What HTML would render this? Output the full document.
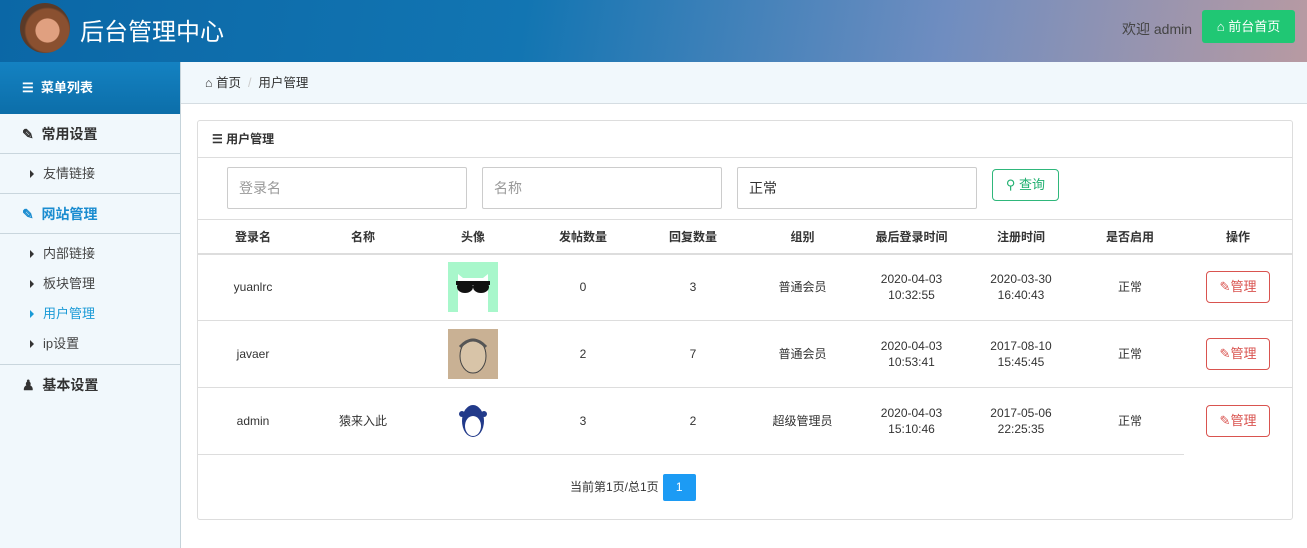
<!DOCTYPE html>
<html><head><meta charset="utf-8">
<style>
*{margin:0;padding:0;box-sizing:border-box}
body{width:1307px;height:548px;overflow:hidden;font-family:"Liberation Sans","Noto Sans CJK SC",sans-serif;background:#fff;position:relative;color:#333;font-size:13px}
.hdr{position:absolute;left:0;top:0;width:1307px;height:62px;background:linear-gradient(100deg,#0b67a6 0%,#1275b2 40%,#6f8dc0 72%,#b89aa2 100%)}
.logo{position:absolute;left:20px;top:3px;width:50px;height:50px;border-radius:50%;background:radial-gradient(ellipse at 55% 55%,#e0a080 0 30%,#8a5030 32% 55%,#5a3a28 60%);overflow:hidden}
.title{position:absolute;left:80px;top:12px;color:#fff;font-size:24px}
.wel{position:absolute;left:1122px;top:19px;color:#444;font-size:14px}
.qbtn{position:absolute;left:1202px;top:10px;width:93px;height:33px;background:#20c774;border-radius:3px;color:#fff;font-size:13px;line-height:33px;text-align:center}
.side{position:absolute;left:0;top:62px;width:181px;height:486px;background:#f1f8fc;border-right:1px solid #c5d3da}
.mtop{height:52px;background:linear-gradient(180deg,#1482c2,#0c6ea9);color:#fff;font-weight:bold;font-size:13px;line-height:52px;padding-left:22px}
.grp{height:40px;line-height:40px;padding-left:22px;font-size:14px;font-weight:bold;border-bottom:1px solid #c9d6dd;color:#333}
.sub{height:40px;line-height:40px;padding-left:30px;font-size:13px;border-bottom:1px solid #c9d6dd;color:#444}
.si{height:30px;line-height:30px;padding-left:30px;font-size:13px;color:#444}
.tri{display:inline-block;width:0;height:0;border-left:4px solid #333;border-top:4px solid transparent;border-bottom:4px solid transparent;margin-right:9px;vertical-align:0}
.bc{position:absolute;left:181px;top:62px;width:1126px;height:42px;background:#f1f8fc;border-bottom:1px solid #d5dde2;font-size:12.5px;line-height:42px;padding-left:24px;color:#333}
.card{position:absolute;left:197px;top:120px;width:1096px;height:400px;border:1px solid #ddd;border-radius:3px}
.ch{height:37px;border-bottom:1px solid #ddd;line-height:37px;padding-left:14px;font-weight:bold;font-size:12px}
.inp{position:absolute;top:46px;width:240px;height:42px;border:1px solid #ccc;border-radius:2px;font-size:14px;line-height:40px;padding-left:11px;color:#999}
.sbtn{position:absolute;left:794px;top:48px;width:67px;height:32px;border:1px solid #2fb77b;border-radius:4px;color:#20b070;font-size:13px;line-height:30px;text-align:center}
table{position:absolute;left:0;top:98px;width:1094px;border-collapse:collapse;font-size:12px;table-layout:fixed}
th{height:34px;border-top:1px solid #ddd;border-bottom:2px solid #ddd;font-weight:bold;text-align:center}
td{height:67px;border-bottom:1px solid #ddd;text-align:center;line-height:16px;color:#333}
.mb{display:inline-block;width:64px;height:32px;border:1px solid #d9534f;border-radius:4px;color:#d9534f;font-size:13px;line-height:30px}
.pg{position:absolute;left:372px;top:353px;font-size:12px;line-height:26px}
.pg span{display:inline-block;width:33px;height:27px;background:#1c9bf4;color:#fff;text-align:center;border-radius:2px;margin-left:4px;vertical-align:middle}
</style></head><body>
<div class="hdr">
<div class="logo"></div>
<div class="title">后台管理中心</div>
<div class="wel">欢迎 admin</div>
<div class="qbtn">&#8962; 前台首页</div>
</div>
<div class="side">
<div class="mtop">&#9776;&nbsp;&nbsp;菜单列表</div>
<div class="grp">&#9998;&nbsp; 常用设置</div>
<div class="sub"><i class="tri"></i>友情链接</div>
<div class="grp" style="color:#1a8cd0">&#9998;&nbsp; 网站管理</div>
<div style="padding:5px 0;border-bottom:1px solid #c9d6dd">
<div class="si"><i class="tri"></i>内部链接</div>
<div class="si"><i class="tri"></i>板块管理</div>
<div class="si" style="color:#1a9ad6"><i class="tri" style="border-left-color:#1a9ad6"></i>用户管理</div>
<div class="si"><i class="tri"></i>ip设置</div>
</div>
<div class="grp" style="border:none">&#9823;&nbsp; 基本设置</div>
</div>
<div class="bc">&#8962; 首页 &nbsp;<span style="color:#ccc">/</span>&nbsp; 用户管理</div>
<div class="card">
<div class="ch">&#9776; 用户管理</div>
<div class="inp" style="left:29px">登录名</div>
<div class="inp" style="left:284px">名称</div>
<div class="inp" style="left:539px;color:#333">正常</div>
<div class="sbtn">&#9906; 查询</div>
<table>
<colgroup><col style="width:110px"><col style="width:110px"><col style="width:110px"><col style="width:110px"><col style="width:110px"><col style="width:109px"><col style="width:109px"><col style="width:110px"><col style="width:108px"><col style="width:108px"></colgroup>
<tr><th>登录名</th><th>名称</th><th>头像</th><th>发帖数量</th><th>回复数量</th><th>组别</th><th>最后登录时间</th><th>注册时间</th><th>是否启用</th><th>操作</th></tr>
<tr><td>yuanlrc</td><td></td><td><svg width="50" height="50" style="vertical-align:middle"><rect width="50" height="50" fill="#a8f7cb"/><path d="M10 50V12l5 4h20l5-4v38z" fill="#fff"/><rect x="8" y="19" width="34" height="4" fill="#111"/><ellipse cx="17" cy="25" rx="8" ry="6" fill="#111"/><ellipse cx="33" cy="25" rx="8" ry="6" fill="#111"/></svg></td><td>0</td><td>3</td><td>普通会员</td><td>2020-04-03<br>10:32:55</td><td>2020-03-30<br>16:40:43</td><td>正常</td><td><span class="mb">&#9998;管理</span></td></tr>
<tr><td>javaer</td><td></td><td><svg width="50" height="50" style="vertical-align:middle"><rect width="50" height="50" fill="#c9b194"/><ellipse cx="25" cy="27" rx="13" ry="17" fill="#d8c4a8" stroke="#444"/><path d="M12 18q13-14 26 0" stroke="#555" fill="none" stroke-width="3"/></svg></td><td>2</td><td>7</td><td>普通会员</td><td>2020-04-03<br>10:53:41</td><td>2017-08-10<br>15:45:45</td><td>正常</td><td><span class="mb">&#9998;管理</span></td></tr>
<tr><td>admin</td><td>猿来入此</td><td><svg width="50" height="50" style="vertical-align:middle"><ellipse cx="25" cy="25" rx="11" ry="16" fill="#223a8a"/><ellipse cx="25" cy="30" rx="8" ry="10" fill="#fff"/><circle cx="14" cy="18" r="3" fill="#223a8a"/><circle cx="36" cy="18" r="3" fill="#223a8a"/></svg></td><td>3</td><td>2</td><td>超级管理员</td><td>2020-04-03<br>15:10:46</td><td>2017-05-06<br>22:25:35</td><td>正常</td><td style="border-bottom:none"><span class="mb">&#9998;管理</span></td></tr>
</table>
<div class="pg">当前第1页/总1页<span>1</span></div>
</div>
</body></html>
